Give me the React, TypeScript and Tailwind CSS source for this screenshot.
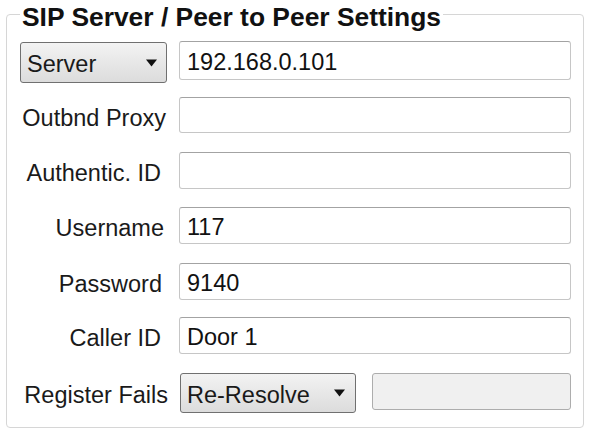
import React from "react";

const Arrow = () => (
  <svg width="11" height="8" viewBox="0 0 11 8" className="shrink-0">
    <path d="M0 0.5 L11 0.5 L5.5 7.5 Z" fill="#111" />
  </svg>
);

const Dropdown = ({ value, className }: { value: string; className: string }) => (
  <div
    className={`flex items-center justify-between rounded-[3px] border border-[#707070] bg-gradient-to-b from-[#f3f3f3] to-[#dcdcdc] pl-[6px] text-[#1a1a1a] ${className}`}
  >
    <span className="pt-[5px]">{value}</span>
    <Arrow />
  </div>
);

const TextBox = ({ value, className = "h-[37px]" }: { value?: string; className?: string }) => (
  <div
    className={`flex items-center rounded-[3px] border border-[#c6c6c6] border-t-[#a3a3a3] bg-white pl-[7px] pt-[5px] text-[#111] ${className}`}
  >
    {value}
  </div>
);

const Label = ({ text, pr }: { text: string; pr: string }) => (
  <div className={`flex h-[37px] items-center justify-end pt-[6px] text-[#1a1a1a] ${pr}`}>{text}</div>
);

export default function App() {
  return (
    <div className="h-[433px] w-[591px] bg-white pl-[6px] pt-[14px] font-['Liberation_Sans',Arial,sans-serif] text-[23.5px]">
      <div className="relative h-[414px] w-[578px] rounded-[4px] border border-[#d6d6d6]">
        {/* group title sits over the frame line */}
        <span className="absolute left-[13px] top-[-13px] bg-white px-[2px] text-[26.4px] font-bold leading-[30px] text-[#111]">
          SIP Server / Peer to Peer Settings
        </span>

        <div className="grid grid-cols-[172px_392px] grid-rows-[56px_55px_55px_56px_54px_56px_auto] pt-[26px]">
          {/* Server / IP */}
          <div className="pl-[13px] pt-[1px]">
            <Dropdown value="Server" className="h-[41px] w-[147px] pr-[9px]" />
          </div>
          <TextBox value="192.168.0.101" className="h-[39px]" />

          <Label text="Outbnd Proxy" pr="pr-[13px]" />
          <TextBox className="h-[36px]" />

          <Label text="Authentic. ID" pr="pr-[18px]" />
          <TextBox />

          <Label text="Username" pr="pr-[15px]" />
          <TextBox value="117" />

          <Label text="Password" pr="pr-[17px]" />
          <TextBox value="9140" />

          <Label text="Caller ID" pr="pr-[18px]" />
          <TextBox value="Door 1" />

          <div className="flex h-[40px] items-center justify-end pr-[11px] pt-[5px] text-[#1a1a1a]">Register Fails</div>
          <div className="flex items-start">
            <Dropdown value="Re-Resolve" className="ml-[1px] h-[40px] w-[176px] pr-[10px]" />
            <div className="ml-[16px] h-[37px] w-[199px] rounded-[3px] border border-[#adadad] bg-[#f0f0f0]" />
          </div>
        </div>
      </div>
    </div>
  );
}
